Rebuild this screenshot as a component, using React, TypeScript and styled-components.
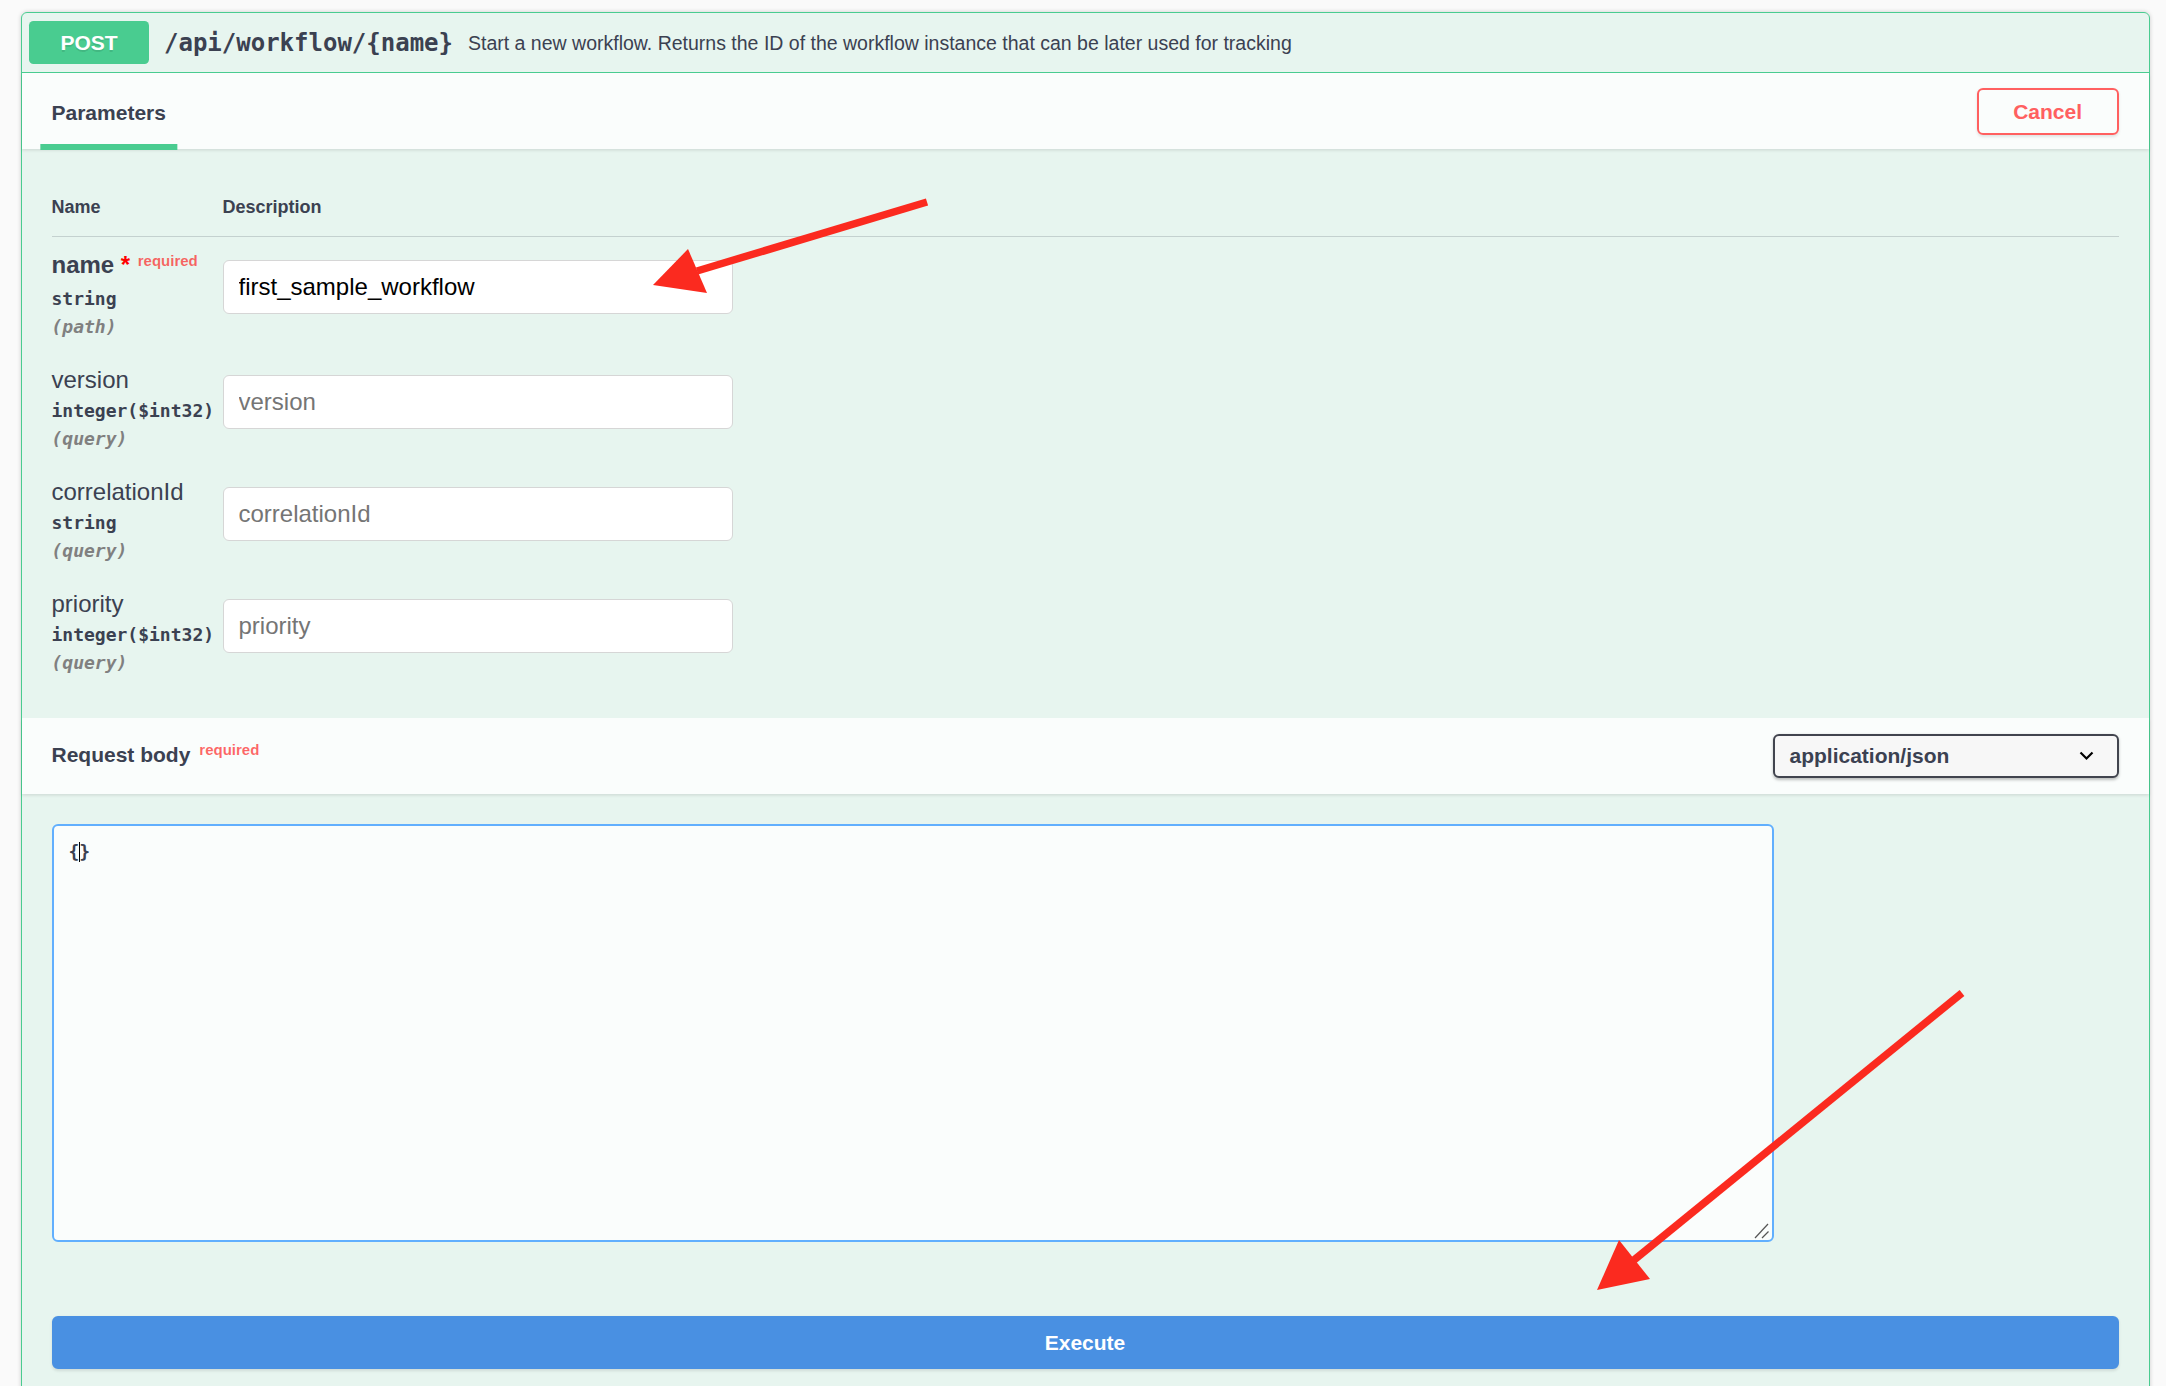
import React from "react";
import styled, { createGlobalStyle } from "styled-components";

const SANS = `"Liberation Sans", Arial, Helvetica, sans-serif`;
const MONO = `"DejaVu Sans Mono", "Liberation Mono", monospace`;
const TEXT = "#3b4151";
const GREEN = "#49cc90";

const GlobalStyle = createGlobalStyle`
  *, *::before, *::after { box-sizing: border-box; }
  html, body { margin: 0; padding: 0; height: 1386px; overflow: hidden; background: #fafafa; }
  body { font-family: ${SANS}; color: ${TEXT}; }
`;

const Page = styled.div`
  position: relative;
  padding: 12px 16.5px 0 20.5px;
  min-height: 1386px;
`;

const Opblock = styled.section`
  border: 1.5px solid ${GREEN};
  border-radius: 6px;
  background: rgba(73, 204, 144, 0.1);
  box-shadow: 0 0 4.5px rgba(0, 0, 0, 0.19);
`;

const Summary = styled.div`
  display: flex;
  align-items: center;
  padding: 8px 7.5px;
  border-bottom: 1.5px solid ${GREEN};
`;

const Method = styled.span`
  min-width: 120px;
  padding: 9.5px 0;
  text-align: center;
  font: 700 21px/24px ${SANS};
  color: #fff;
  background: ${GREEN};
  border-radius: 4.5px;
  text-shadow: 0 1.5px 0 rgba(0, 0, 0, 0.1);
`;

const Path = styled.span`
  padding: 0 15px;
  font: 700 24px/28px ${MONO};
  color: ${TEXT};
`;

const Description = styled.span`
  flex: 1;
  font: 400 19.5px/24px ${SANS};
  color: ${TEXT};
`;

const SectionHeader = styled.div`
  display: flex;
  align-items: center;
  min-height: 76px;
  padding: 12px 30px;
  background: rgba(255, 255, 255, 0.8);
  box-shadow: 0 1.5px 3px rgba(0, 0, 0, 0.1);
`;

const TabHeader = styled.div`
  flex: 1;
  display: flex;
  padding-top: 3px;
`;

const TabTitle = styled.h4`
  position: relative;
  margin: 0;
  font: 700 21px/24px ${SANS};
  color: ${TEXT};
  &::after {
    content: "";
    position: absolute;
    left: 50%;
    bottom: -25px;
    width: 120%;
    height: 6px;
    transform: translateX(-50%);
    background: ${GREEN};
  }
`;

const CancelButton = styled.button`
  padding: 9px 34.5px;
  font: 700 21px/25px ${SANS};
  color: #ff6060;
  background: transparent;
  border: 2px solid #ff6060;
  border-radius: 6px;
  box-shadow: 0 1.5px 3px rgba(0, 0, 0, 0.1);
`;

const TableContainer = styled.div`
  padding: 30px;
`;

const ParamHead = styled.div`
  display: grid;
  grid-template-columns: 171px 1fr;
  padding: 18px 0;
  border-bottom: 1.5px solid rgba(59, 65, 81, 0.2);
  font: 700 18px/21px ${SANS};
  color: ${TEXT};
`;

const ParamRow = styled.div`
  display: grid;
  grid-template-columns: 171px 1fr;
  padding: 15px 0;
`;

const NameCell = styled.div`
  display: flex;
  flex-direction: column;
`;

const ParamName = styled.div<{ $required?: boolean }>`
  font: ${(p) => (p.$required ? 700 : 400)} 24px/25px ${SANS};
  color: ${TEXT};
  white-space: nowrap;
`;

const Asterisk = styled.span`
  color: red;
`;

const RequiredTag = styled.span<{ $gap: number }>`
  position: relative;
  top: -7px;
  padding-left: ${(p) => p.$gap}px;
  font-size: 15px;
  font-weight: 700;
  color: rgba(255, 0, 0, 0.6);
`;

const ParamType = styled.div`
  padding: 7.5px 0;
  font: 700 18px/21px ${MONO};
  color: ${TEXT};
  white-space: nowrap;
`;

const ParamIn = styled.div`
  font: italic 700 18px/21px ${MONO};
  color: gray;
`;

const TextInput = styled.input`
  display: block;
  width: 100%;
  max-width: 510px;
  margin: 7.5px 0;
  padding: 12px 15px;
  border: 1.5px solid #d6d6d6;
  border-radius: 6px;
  background: #fff;
  font: 400 24px/28px ${SANS};
  color: #000;
  outline: none;
  &::placeholder {
    color: #757575;
  }
`;

const SectionTitle = styled.h4`
  flex: 1;
  margin: 0;
  font: 700 21px/24px ${SANS};
  color: ${TEXT};
`;

const MediaSelect = styled.div`
  display: flex;
  align-items: center;
  justify-content: space-between;
  width: 346px;
  height: 44px;
  padding: 0 23px 0 15px;
  border: 2px solid #41444e;
  border-radius: 6px;
  background: #f7f7f7;
  box-shadow: 0 1.5px 3px rgba(0, 0, 0, 0.25);
  font: 700 21px/24px ${SANS};
  color: ${TEXT};
`;

const BodyParam = styled.div`
  padding: 30px 30px 44px;
`;

const Editor = styled.div`
  position: relative;
  width: 1722px;
  height: 418px;
  padding: 15px;
  border: 2px solid #61affe;
  border-radius: 6px;
  background: rgba(255, 255, 255, 0.8);
  font: 700 18px/21px ${MONO};
  color: ${TEXT};
`;

const Caret = styled.span`
  display: inline-block;
  width: 1.5px;
  height: 20px;
  margin: 0 -0.75px;
  vertical-align: -4px;
  background: #000;
`;

const Grip = styled.svg`
  position: absolute;
  right: 2px;
  bottom: 1px;
`;

const ExecuteWrapper = styled.div`
  padding: 30px;
`;

const ExecuteButton = styled.button`
  display: block;
  width: 100%;
  padding: 12.5px 0;
  border: 2px solid #4990e2;
  border-radius: 6px;
  background: #4990e2;
  box-shadow: 0 1.5px 3px rgba(0, 0, 0, 0.1);
  font: 700 21px/24px ${SANS};
  color: #fff;
`;

const Annotations = styled.svg`
  position: absolute;
  top: 0;
  left: 0;
  width: 2166px;
  height: 1386px;
  pointer-events: none;
`;

type Param = {
  name: string;
  type: string;
  location: string;
  required?: boolean;
  value?: string;
};

const params: Param[] = [
  { name: "name", type: "string", location: "(path)", required: true, value: "first_sample_workflow" },
  { name: "version", type: "integer($int32)", location: "(query)" },
  { name: "correlationId", type: "string", location: "(query)" },
  { name: "priority", type: "integer($int32)", location: "(query)" },
];

const RED = "#fb2a1f";

function Arrow({ from, to, head }: { from: [number, number]; to: [number, number]; head: [number, number][] }) {
  return (
    <g>
      <line x1={from[0]} y1={from[1]} x2={to[0]} y2={to[1]} stroke={RED} strokeWidth={7.5} />
      <polygon points={head.map((p) => p.join(",")).join(" ")} fill={RED} />
    </g>
  );
}

export default function App() {
  return (
    <>
      <GlobalStyle />
      <Page>
        <Opblock>
          <Summary>
            <Method>POST</Method>
            <Path>/api/workflow/{"{name}"}</Path>
            <Description>
              Start a new workflow. Returns the ID of the workflow instance that can be later used for tracking
            </Description>
          </Summary>

          <SectionHeader>
            <TabHeader>
              <TabTitle>Parameters</TabTitle>
            </TabHeader>
            <CancelButton>Cancel</CancelButton>
          </SectionHeader>

          <TableContainer>
            <ParamHead>
              <div>Name</div>
              <div>Description</div>
            </ParamHead>
            {params.map((p) => (
              <ParamRow key={p.name}>
                <NameCell>
                  <ParamName $required={p.required}>
                    {p.name}
                    {p.required && (
                      <>
                        <Asterisk>&nbsp;*</Asterisk>
                        <RequiredTag $gap={7.5}>required</RequiredTag>
                      </>
                    )}
                  </ParamName>
                  <ParamType>{p.type}</ParamType>
                  <ParamIn>{p.location}</ParamIn>
                </NameCell>
                <div>
                  <TextInput type="text" placeholder={p.name} defaultValue={p.value} />
                </div>
              </ParamRow>
            ))}
          </TableContainer>

          <SectionHeader>
            <SectionTitle>
              Request body
              <RequiredTag $gap={9}>required</RequiredTag>
            </SectionTitle>
            <MediaSelect>
              <span>application/json</span>
              <svg width="15" height="10" viewBox="0 0 15 10">
                <polyline points="1.5,1.5 7.5,7.5 13.5,1.5" fill="none" stroke="#000" strokeWidth="2.2" />
              </svg>
            </MediaSelect>
          </SectionHeader>

          <BodyParam>
            <Editor>
              {"{"}
              <Caret />
              {"}"}
              <Grip width="16" height="16" viewBox="0 0 16 16">
                <line x1="14" y1="1" x2="1" y2="15" stroke="#555" strokeWidth="1.2" />
                <line x1="14.5" y1="8.5" x2="8" y2="15" stroke="#555" strokeWidth="1.2" />
              </Grip>
            </Editor>
          </BodyParam>

          <ExecuteWrapper>
            <ExecuteButton>Execute</ExecuteButton>
          </ExecuteWrapper>
        </Opblock>

        <Annotations viewBox="0 0 2166 1386">
          <Arrow from={[927, 202]} to={[697, 271]} head={[[653, 285], [688, 249], [707, 293]]} />
          <Arrow from={[1962, 993]} to={[1634, 1260]} head={[[1597, 1290], [1619, 1240], [1650, 1279]]} />
        </Annotations>
      </Page>
    </>
  );
}
